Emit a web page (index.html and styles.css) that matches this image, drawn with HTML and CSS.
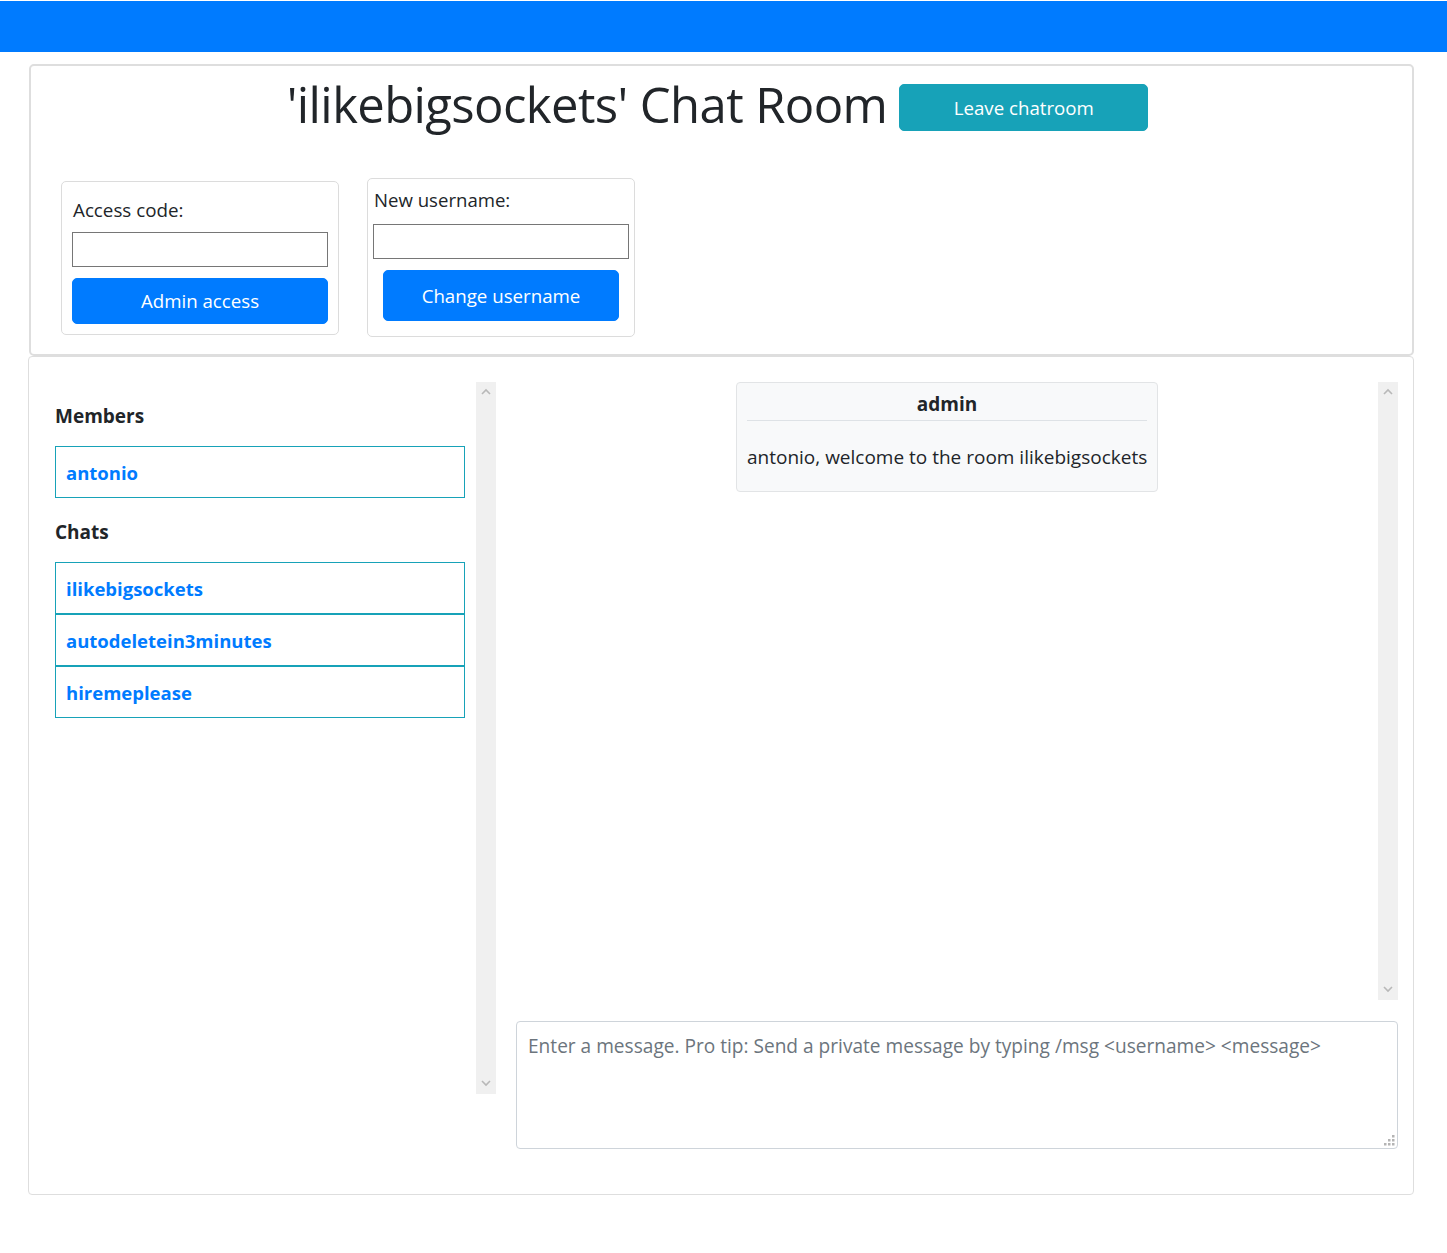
FILE: index.html
```html
<!DOCTYPE html>
<html lang="en">
<head>
<meta charset="utf-8">
<title>Chat Room</title>
<link rel="stylesheet" href="styles.css">
</head>
<body>
<nav class="navbar"></nav>
<main class="page">
  <section class="card top-card">
    <div class="title-row">
      <h1 class="room-title">'ilikebigsockets' Chat Room</h1>
      <button class="btn btn-info btn-leave">Leave chatroom</button>
    </div>
    <div class="forms-row">
      <div class="form-box form-admin">
        <label class="form-label" for="code">Access code:</label>
        <input class="text-input" id="code" type="text">
        <button class="btn btn-primary btn-admin">Admin access</button>
      </div>
      <div class="form-box form-name">
        <label class="form-label" for="uname">New username:</label>
        <input class="text-input" id="uname" type="text">
        <button class="btn btn-primary btn-change">Change username</button>
      </div>
    </div>
  </section>
  <section class="card main-card">
    <div class="sidebar">
      <div class="sidebar-content">
        <h5 class="side-heading first">Members</h5>
        <ul class="side-list">
          <li class="side-item"><a href="#">antonio</a></li>
        </ul>
        <h5 class="side-heading">Chats</h5>
        <ul class="side-list">
          <li class="side-item"><a href="#">ilikebigsockets</a></li>
          <li class="side-item"><a href="#">autodeletein3minutes</a></li>
          <li class="side-item"><a href="#">hiremeplease</a></li>
        </ul>
      </div>
      <div class="fake-scrollbar">
        <svg class="chev" width="10" height="7" viewBox="0 0 10 7"><polyline points="1,6 5,2 9,6" fill="none" stroke="#b8b8b8" stroke-width="1.6"/></svg>
        <svg class="chev" width="10" height="7" viewBox="0 0 10 7"><polyline points="1,1 5,5 9,1" fill="none" stroke="#b8b8b8" stroke-width="1.6"/></svg>
      </div>
    </div>
    <div class="chat">
      <div class="messages-wrap">
        <div class="messages">
          <div class="message">
            <div class="message-author">admin</div>
            <div class="message-text">antonio, welcome to the room ilikebigsockets</div>
          </div>
        </div>
        <div class="fake-scrollbar">
          <svg class="chev" width="10" height="7" viewBox="0 0 10 7"><polyline points="1,6 5,2 9,6" fill="none" stroke="#b8b8b8" stroke-width="1.6"/></svg>
          <svg class="chev" width="10" height="7" viewBox="0 0 10 7"><polyline points="1,1 5,5 9,1" fill="none" stroke="#b8b8b8" stroke-width="1.6"/></svg>
        </div>
      </div>
      <div class="input-wrap">
        <textarea class="message-input" placeholder="Enter a message. Pro tip: Send a private message by typing /msg &lt;username&gt; &lt;message&gt;"></textarea>
        <svg class="grip" width="12" height="12" viewBox="0 0 12 12">
          <rect x="9" y="1" width="2.5" height="2.5" fill="#b4b4b4"/>
          <rect x="5" y="5" width="2.5" height="2.5" fill="#b4b4b4"/>
          <rect x="9" y="5" width="2.5" height="2.5" fill="#b4b4b4"/>
          <rect x="1" y="9" width="2.5" height="2.5" fill="#b4b4b4"/>
          <rect x="5" y="9" width="2.5" height="2.5" fill="#b4b4b4"/>
          <rect x="9" y="9" width="2.5" height="2.5" fill="#b4b4b4"/>
        </svg>
      </div>
    </div>
  </section>
</main>
</body>
</html>
```

FILE: styles.css
```css
* { box-sizing: border-box; }

body {
  margin: 0;
  font-family: "Open Sans", "Noto Sans", Arial, sans-serif;
  color: #212529;
  background: #fff;
}

.navbar {
  margin-top: 1px;
  height: 51px;
  background: #007bff;
}

.page {
  padding: 12px 33px 40px 28px;
}

.card {
  background: #fff;
  border-radius: 5px;
}

.top-card {
  margin-left: 1px;
  border: 2px solid #dedede;
  height: 292px;
  padding: 11px 30px 0 30px;
}

.title-row {
  display: flex;
  justify-content: center;
  align-items: center;
  gap: 12px;
  padding-right: 8px;
}

.room-title {
  margin: 0;
  font-size: 49px;
  font-weight: 400;
  line-height: 54px;
  letter-spacing: -0.6px;
  color: #212529;
}

.btn {
  font-family: inherit;
  border: 1px solid transparent;
  border-radius: 5px;
  color: #fff;
  font-size: 18.7px;
  cursor: pointer;
}

.btn-info {
  background: #17a2b8;
  border-color: #17a2b8;
}

.btn-primary {
  background: #007bff;
  border-color: #007bff;
}

.btn-leave {
  width: 249px;
  height: 47px;
  margin-top: 6px;
}

.forms-row {
  display: flex;
  align-items: center;
  gap: 28px;
  margin-top: 47px;
}

.form-box {
  display: flex;
  flex-direction: column;
  border: 1px solid #dcdcdc;
  border-radius: 5px;
}

.form-admin {
  width: 278px;
  height: 154px;
  padding: 14px 10px 10px 10px;
}

.form-name {
  width: 268px;
  height: 159px;
  padding: 7px 5px 15px 5px;
  align-items: center;
}

.form-label {
  font-size: 18.8px;
  line-height: 28px;
  margin-bottom: 8px;
  align-self: stretch;
  padding-left: 1px;
}

.form-name .form-label {
  font-size: 18.6px;
  margin-bottom: 10px;
}

.text-input {
  width: 256px;
  height: 35px;
  border: 1px solid #767676;
  border-radius: 0;
  font-family: inherit;
  font-size: 16px;
  padding: 2px 4px;
  align-self: flex-start;
}

.btn-admin {
  margin-top: 11px;
  width: 256px;
  height: 46px;
}

.btn-change {
  margin-top: 11px;
  width: 236px;
  height: 51px;
}

.main-card {
  margin-top: 0;
  border: 1px solid #dedede;
  border-radius: 4px;
  height: 839px;
  padding: 25px 15px 0 26px;
  display: grid;
  grid-template-columns: 441px 882px;
  column-gap: 20px;
  align-items: start;
}

.sidebar {
  display: flex;
  height: 712px;
}

.sidebar-content {
  flex: 1;
  padding: 22px 11px 0 0;
}

.side-heading {
  margin: 0 0 18px 0;
  font-size: 19px;
  font-weight: 700;
  line-height: 24px;
}

.side-list + .side-heading {
  margin-top: 22px;
}

.side-list {
  list-style: none;
  margin: 0;
  padding: 0;
}

.side-item {
  border: 1px solid #17a2b8;
  height: 52px;
  display: flex;
  align-items: center;
  padding-left: 10px;
}

.side-item a {
  color: #007bff;
  font-weight: 700;
  font-size: 18.5px;
  text-decoration: none;
}

.fake-scrollbar {
  width: 20px;
  flex: none;
  background: #f0f0f0;
  display: flex;
  flex-direction: column;
  justify-content: space-between;
  align-items: center;
  padding: 6px 0 7px 0;
}

.chev { display: block; }

.chat {
  display: flex;
  flex-direction: column;
}

.messages-wrap {
  display: flex;
  height: 618px;
}

.messages {
  flex: 1;
  display: flex;
  flex-direction: column;
  align-items: center;
}

.message {
  width: 422px;
  background: #f8f9fa;
  border: 1px solid #e2e4e6;
  border-radius: 4px;
  padding: 8px 10px 6px 10px;
}

.message-author {
  text-align: center;
  font-weight: 700;
  font-size: 19px;
  line-height: 26px;
  padding-bottom: 3px;
  border-bottom: 1px solid #dee2e6;
}

.message-text {
  margin: 24px 0 16px 0;
  font-size: 19px;
  line-height: 24px;
  white-space: nowrap;
}

.input-wrap {
  position: relative;
  margin-top: 21px;
  width: 882px;
  height: 128px;
}

.message-input {
  display: block;
  width: 100%;
  height: 100%;
  border: 1px solid #ced4da;
  border-radius: 4px;
  padding: 12px 11px;
  font-family: inherit;
  font-size: 19.1px;
  line-height: 24px;
  color: #495057;
  resize: none;
}

.message-input::placeholder {
  color: #6c757d;
  opacity: 1;
}

.grip {
  position: absolute;
  right: 3px;
  bottom: 3px;
  pointer-events: none;
}
```
